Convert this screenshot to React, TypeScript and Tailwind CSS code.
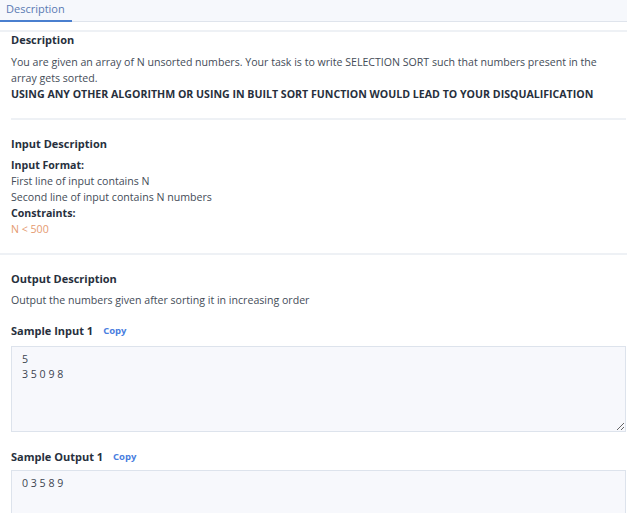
import React from "react";

export default function App() {
  return (
    <div className="w-[627px] h-[513px] overflow-hidden bg-white text-[10.6px] leading-[16px] text-[#444c58]" style={{ fontFamily: '"Open Sans", "Noto Sans", sans-serif' }}>
      <div className="h-[22px] bg-[#f6f8fc] border-b border-[#dfe4ec] flex">
        <div className="w-[72px] h-[22px] border-b-2 border-[#4a7fcf] text-[#5a7ab3] text-[11px] pl-[6px] leading-[16px] pt-[1px]">Description</div>
      </div>
      <div className="h-[8px]" />
      <div className="h-[2px] bg-[#eef1f5]" />
      <div className="pl-[11px] pr-[1px]">
        <div className="font-bold text-[#27303d] h-[16px] leading-[16px] text-[11px]">Description</div>
        <div className="mt-[6px]">
          <div>You are given an array of N unsorted numbers. Your task is to write SELECTION SORT such that numbers present in the</div>
          <div>array gets sorted.</div>
          <div className="font-bold text-[#27303d]">USING ANY OTHER ALGORITHM OR USING IN BUILT SORT FUNCTION WOULD LEAD TO YOUR DISQUALIFICATION</div>
        </div>
        <div className="mt-[16px] h-[2px] bg-[#eef1f5]" />
        <div className="mt-[16px] font-bold text-[#27303d] text-[11px]">Input Description</div>
        <div className="mt-[5px]">
          <div className="font-bold text-[#27303d]">Input Format:</div>
          <div>First line of input contains N</div>
          <div>Second line of input contains N numbers</div>
          <div className="font-bold text-[#27303d]">Constraints:</div>
          <div className="text-[#e59a70]">N &lt; 500</div>
        </div>
      </div>
      <div className="mt-[16px] h-[2px] bg-[#eef1f5]" />
      <div className="pl-[11px] pr-[1px]">
        <div className="mt-[16px] font-bold text-[#27303d] text-[11px]">Output Description</div>
        <div className="mt-[5px]">Output the numbers given after sorting it in increasing order</div>
        <div className="mt-[15px] flex items-center gap-[10px]">
          <span className="font-bold text-[#27303d] text-[11px]">Sample Input 1</span>
          <span className="font-bold text-[#4a7ee0] text-[9.5px]">Copy</span>
        </div>
        <textarea
          readOnly
          defaultValue={"5\n3 5 0 9 8"}
          className="block mt-[7px] w-full h-[86px] bg-[#f7f8fc] border border-[#dde3ec] pl-[10px] pt-[5px] leading-[15px] text-[10.6px] text-[#3c4450] outline-none"
          style={{ fontFamily: '"Open Sans", "Noto Sans", sans-serif' }}
        />
        <div className="mt-[17px] flex items-center gap-[10px]">
          <span className="font-bold text-[#27303d] text-[11px]">Sample Output 1</span>
          <span className="font-bold text-[#4a7ee0] text-[9.5px]">Copy</span>
        </div>
        <textarea
          readOnly
          defaultValue={"0 3 5 8 9"}
          className="block mt-[5px] w-full h-[86px] bg-[#f7f8fc] border border-[#dde3ec] pl-[10px] pt-[5px] leading-[15px] text-[10.6px] text-[#3c4450] outline-none"
          style={{ fontFamily: '"Open Sans", "Noto Sans", sans-serif' }}
        />
      </div>
    </div>
  );
}
